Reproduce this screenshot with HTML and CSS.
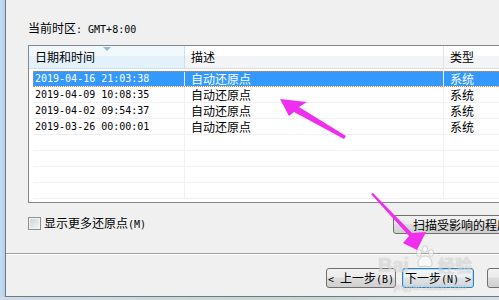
FILE: index.html
```html
<!DOCTYPE html>
<html lang="zh-CN">

<head>
  <meta charset="UTF-8">
  <meta name="viewport" content="width=device-width, initial-scale=1.0">
  <title>系统还原</title>
  <link rel="stylesheet" href="styles.css">
</head>

<body>

  <div class="screen">
    <div class="frame-edge"></div>

    <div class="dialog">
      <div class="dialog__body">
        <div class="timezone">当前时区<span class="mono">:&nbsp;GMT+8:00</span></div>

        <div class="list">
          <div class="list__head">
            <div class="list__col list__col_sorted">日期和时间<span class="sort-arrow"></span></div>
            <div class="list__col">描述</div>
            <div class="list__col">类型</div>
          </div>

          <div class="list__rows">
            <div class="list__row list__row_selected">
              <div class="list__cell mono">2019-04-16 21:03:38</div>
              <div class="list__cell">自动还原点</div>
              <div class="list__cell">系统</div>
            </div>
            <div class="list__row">
              <div class="list__cell mono">2019-04-09 10:08:35</div>
              <div class="list__cell">自动还原点</div>
              <div class="list__cell">系统</div>
            </div>
            <div class="list__row">
              <div class="list__cell mono">2019-04-02 09:54:37</div>
              <div class="list__cell">自动还原点</div>
              <div class="list__cell">系统</div>
            </div>
            <div class="list__row">
              <div class="list__cell mono">2019-03-26 00:00:01</div>
              <div class="list__cell">自动还原点</div>
              <div class="list__cell">系统</div>
            </div>
            <div class="list__row">
              <div class="list__cell"></div>
              <div class="list__cell"></div>
              <div class="list__cell"></div>
            </div>
            <div class="list__row">
              <div class="list__cell"></div>
              <div class="list__cell"></div>
              <div class="list__cell"></div>
            </div>
            <div class="list__row">
              <div class="list__cell"></div>
              <div class="list__cell"></div>
              <div class="list__cell"></div>
            </div>
            <div class="list__row">
              <div class="list__cell"></div>
              <div class="list__cell"></div>
              <div class="list__cell"></div>
            </div>
          </div>
        </div>

        <div class="options">
          <label class="check">
            <span class="check__box"></span>
            <span>显示更多还原点<span class="mono">(M)</span></span>
          </label>
          <button class="btn btn_scan">扫描受影响的程序<span class="mono">(P)</span></button>
        </div>
      </div>

      <div class="divider"></div>

      <div class="footer">
        <button class="btn btn_back"><span class="mono">&lt;&nbsp;</span>上一步<span class="mono">(B)</span></button>
        <button class="btn btn_next btn_focused">下一步<span class="mono">(N)&nbsp;&gt;</span></button>
        <button class="btn btn_cancel">取消</button>
      </div>
    </div>
  </div>

  <div class="taskbar"></div>

  <div class="watermark">
    <span class="watermark__brand">Bai</span>
    <svg class="watermark__paw" width="22" height="24" viewBox="0 0 22 24">
      <ellipse cx="5" cy="8" rx="2.6" ry="3.4" />
      <ellipse cx="11" cy="4" rx="2.6" ry="3.4" />
      <ellipse cx="17" cy="8" rx="2.6" ry="3.4" />
      <path d="M4 19 C4 13 8 11 11 11 C14 11 18 13 18 19 C18 22 15 22 11 21 C7 22 4 22 4 19 Z" />
    </svg>
    <span class="watermark__brand watermark__cn">经验</span>
    <span class="watermark__url">jingyan.baidu.com</span>
  </div>

  <svg class="arrows" width="499" height="300" viewBox="0 0 499 300">
    <polygon points="280,99 307,102 299,107 346,136 344,139 294,112 289,116" />
    <polygon points="371,194 373,193 412,233 426,232 417,250 403,243 409,236" />
  </svg>

</body>

</html>
```

FILE: styles.css
```css
* {
  box-sizing: border-box;
}

body {
  margin: 0;
  width: 499px;
  height: 300px;
  overflow: hidden;
  position: relative;
  background-color: #f0f0f0;
  font-family: "Noto Sans CJK SC", sans-serif;
  font-size: 12px;
  color: #000;
}

.mono {
  font-family: "DejaVu Sans Mono", monospace;
  font-size: 10px;
}

.screen {
  display: flex;
  height: 297px;
}

.frame-edge {
  width: 5px;
  background-image: linear-gradient(to right, #c4ddf4, #b2d2ef);
}

.dialog {
  flex: 1;
  min-width: 0;
  display: flex;
  flex-direction: column;
  border-left: 1px solid #6f7884;
  border-bottom: 1px solid #6f7884;
  overflow: hidden;
}

.dialog__body {
  height: 253px;
  padding: 21px 0 0 22px;
}

.timezone {
  line-height: 14px;
}

/* list view */

.list {
  margin-top: 8px;
  width: 560px;
  height: 158px;
  border: 1px solid #828790;
  background-color: #fff;
}

.list__head {
  display: grid;
  grid-template-columns: 156px 259px 1fr;
  height: 23px;
}

.list__col {
  padding-left: 6px;
  line-height: 22px;
  border-right: 1px solid #e3e4e6;
  border-bottom: 1px solid #dcdde0;
  background-image: linear-gradient(#ffffff 45%, #f3f4f6 45%);
}

.list__col_sorted {
  position: relative;
  border-right-color: #c3e2f4;
  border-bottom-color: #c3e2f4;
  background-image: linear-gradient(#f2f9fd 45%, #e2f1fa 45%);
}

.sort-arrow {
  position: absolute;
  top: 1px;
  left: 74px;
  border-left: 4px solid transparent;
  border-right: 4px solid transparent;
  border-top: 4px solid #93b8d6;
}

.list__rows {
  padding-top: 2px;
}

.list__row {
  display: grid;
  grid-template-columns: 152px 259px 1fr;
  height: 16px;
  margin-left: 4px;
  border-bottom: 1px solid #f0f0f0;
  line-height: 15px;
}

.list__cell {
  padding-left: 6px;
  border-right: 1px solid #f0f0f0;
  white-space: nowrap;
}

.list__cell:first-child {
  padding-left: 2px;
}

.list__cell.mono {
  font-size: 10px;
}

.list__row_selected {
  background-color: #3399ff;
  color: #fff;
  outline: 1px dotted #d9893a;
  outline-offset: -1px;
}

/* options */

.options {
  display: grid;
  grid-template-columns: 365px auto;
  align-items: start;
  margin-top: 12px;
}

.check {
  display: flex;
  align-items: center;
  gap: 3px;
  margin-top: 1px;
  line-height: 13px;
}

.check__box {
  width: 13px;
  height: 13px;
  border: 1px solid #8e8f8f;
  box-shadow: inset 0 0 0 1px #f4f4f4;
  background-image: linear-gradient(135deg, #cdd0d4, #f7f7f7);
}

.btn {
  height: 19px;
  padding: 0;
  border: 1px solid #707070;
  border-radius: 3px;
  background-image: linear-gradient(#f2f2f2, #ebebeb 45%, #dddddd 50%, #cfcfcf);
  font: inherit;
  color: #000;
  line-height: 17px;
  white-space: nowrap;
  text-align: center;
}

.btn_scan {
  width: 130px;
  padding-left: 19px;
  text-align: left;
}

.btn_focused {
  border-color: #3c7fb1;
  box-shadow: inset 0 0 0 1px #a8def8;
  background-image: linear-gradient(#f4f7f9, #eceff1 45%, #dfe3e6 50%, #d2d8dc);
}

/* footer */

.divider {
  height: 2px;
  border-top: 1px solid #a0a0a0;
  border-bottom: 1px solid #ffffff;
}

.footer {
  display: flex;
  gap: 6px;
  height: 41px;
  padding: 13px 0 0 320px;
}

.footer .btn {
  height: 20px;
  line-height: 18px;
  flex-shrink: 0;
}

.btn_back {
  width: 70px;
}

.btn_next {
  width: 72px;
}

.btn_cancel {
  width: 75px;
  margin-left: 7px;
}

.taskbar {
  height: 3px;
  background-image: linear-gradient(to right, #cfdbe6, #c6d6cf 60%, #d4dde6);
}

/* overlays */

.watermark {
  position: absolute;
  left: 378px;
  top: 244px;
  width: 100px;
  color: rgba(255, 255, 255, 0.55);
  text-shadow: 0 0 1px rgba(90, 90, 90, 0.4);
  pointer-events: none;
}

.watermark__brand {
  position: absolute;
  top: 10px;
  left: 0;
  font-family: "Liberation Sans", sans-serif;
  font-size: 20px;
  font-weight: bold;
  line-height: 22px;
}

.watermark__paw {
  position: absolute;
  left: 36px;
  top: 1px;
  fill: rgba(255, 255, 255, 0.55);
  stroke: rgba(110, 110, 110, 0.35);
  stroke-width: 0.8;
}

.watermark__cn {
  left: 60px;
  font-family: "Noto Sans CJK SC", sans-serif;
  font-size: 17px;
}

.watermark__url {
  position: absolute;
  top: 38px;
  left: 16px;
  font-family: "Liberation Sans", sans-serif;
  font-size: 9px;
  line-height: 10px;
}

.arrows {
  position: absolute;
  left: 0;
  top: 0;
  fill: #ee30ee;
  pointer-events: none;
}
```
